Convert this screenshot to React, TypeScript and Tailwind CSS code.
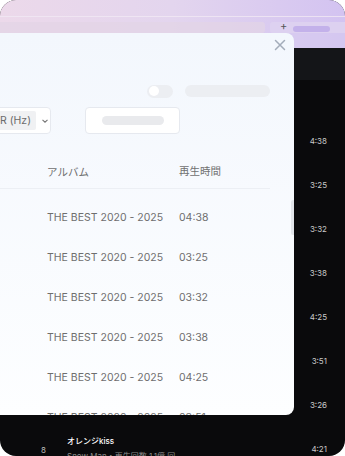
import React from "react";

const times = ["4:38", "3:25", "3:32", "3:38", "4:25", "3:51", "3:26"];
const rows = [
  ["THE BEST 2020 - 2025", "04:38"],
  ["THE BEST 2020 - 2025", "03:25"],
  ["THE BEST 2020 - 2025", "03:32"],
  ["THE BEST 2020 - 2025", "03:38"],
  ["THE BEST 2020 - 2025", "04:25"],
  ["THE BEST 2020 - 2025", "03:51"],
];

export default function App() {
  const font = { fontFamily: "Inter, 'Noto Sans CJK JP', sans-serif" };
  return (
    <div className="w-[345px] h-[456px] bg-white" style={font}>
      <div className="relative w-[345px] h-[456px] rounded-[16px] overflow-hidden bg-[#0a0a0c]">
        {/* top gradient header */}
        <div className="h-[48px] bg-gradient-to-r from-[#ecd9ea] via-[#e3d5ee] to-[#d3c3f1] flex flex-col">
          <div className="h-[16px]" />
          <div className="h-px bg-[#f1e9f4] opacity-80" />
          <div className="h-[5px]" />
          <div className="flex h-[11px] gap-[5px]">
            <div className="w-[265px] rounded-r-[3px] bg-[#e2d4e6]/70" />
            <div className="flex-1 rounded-l-[3px] bg-[#ddd1f0] flex items-center pl-[10px] gap-[6px]">
              <span className="text-[11px] leading-none text-[#555] -mt-[3px]">+</span>
              <div className="w-[37px] h-[6px] rounded-full bg-[#c3b1ea] mt-[3px]" />
            </div>
          </div>
          <div className="flex-1 bg-[#d8ccf1]/40" />
        </div>
        {/* dark toolbar */}
        <div className="h-[32px] bg-[#141518]" />
        <div className="h-[39px]" />
        {/* dark list */}
        <div className="flex flex-col">
          {times.map((t, i) => (
            <div key={i} className="h-[44px] flex items-center justify-end pr-[18px]">
              <span className="text-[8px] text-[#c9c9c9]">{t}</span>
            </div>
          ))}
          <div className="h-[44px] flex items-center pr-[18px]">
            <span className="w-[67px] pl-[41px] text-[8px] text-[#bdbdbd] pt-[1px]">8</span>
            <div className="flex-1 flex flex-col -mt-[1px]">
              <span className="text-[8px] leading-[12px] text-white font-medium">オレンジkiss</span>
              <span className="text-[8px] leading-[12px] text-[#8a8a8a] mt-[3px]">Snow Man・再生回数 1.1億 回</span>
            </div>
            <span className="text-[8px] text-[#c9c9c9]">4:21</span>
          </div>
        </div>

        {/* modal overlay */}
        <div className="absolute left-0 top-[33px] w-[294px] h-[382px] rounded-r-[8px] overflow-hidden bg-gradient-to-b from-[#f3f7fd] to-[#fdfeff]">
          <div className="h-[50px] flex justify-end pr-[8px] pt-[6px]">
            <svg width="12" height="12" viewBox="0 0 12 12">
              <path d="M1.5 1.5 L10.5 10.5 M10.5 1.5 L1.5 10.5" stroke="#a3acba" strokeWidth="1.5" strokeLinecap="round" />
            </svg>
          </div>
          <div className="h-[16px] flex items-center pl-[147px]">
            <div className="w-[26px] h-[13px] rounded-full bg-[#eceef2] flex items-center pl-[2px]">
              <div className="w-[10px] h-[10px] rounded-full bg-white" />
            </div>
            <div className="ml-[12px] w-[85px] h-[12px] rounded-full bg-[#eceef2]" />
          </div>
          <div className="mt-[8px] h-[27px] flex">
            <div className="ml-[-40px] w-[91px] h-[27px] rounded-[4px] border border-[#e6e9ef] bg-white flex items-center pl-[4px]">
              <div className="h-[19px] w-[71px] rounded-[2px] bg-[#f0f1f3] flex items-center justify-end pr-[5px]">
                <span className="text-[10.5px] text-[#6b6b6b] whitespace-nowrap">SR (Hz)</span>
              </div>
              <svg width="8" height="6" viewBox="0 0 8 6" className="ml-[5px]">
                <path d="M1.5 1.8 L4 4.2 L6.5 1.8" stroke="#777" strokeWidth="1.1" fill="none" />
              </svg>
            </div>
            <div className="ml-[34px] w-[95px] h-[27px] rounded-[4px] border border-[#e6e9ef] bg-white flex items-center pl-[16px]">
              <div className="w-[62px] h-[9px] rounded-full bg-[#e9eaed]" />
            </div>
          </div>
          <div className="w-[270px] h-[55px] border-b border-[#eceff4] flex pt-[31px] text-[10.5px] leading-[16px] text-[#707070]">
            <span className="w-[179px] pl-[47px]">アルバム</span>
            <span className="-mt-[1px]">再生時間</span>
          </div>
          <div className="mt-[9px] flex flex-col">
            {rows.map((r, i) => (
              <div key={i} className="h-[40px] flex items-center text-[10.5px] text-[#6e6e6e]">
                <span className="w-[179px] pl-[47px] whitespace-nowrap">{r[0]}</span>
                <span>{r[1]}</span>
              </div>
            ))}
          </div>
          <div className="absolute left-[291px] top-[167px] w-[3px] h-[35px] rounded-l-[2px] bg-[#e2e5ea]" />
        </div>
      </div>
    </div>
  );
}
